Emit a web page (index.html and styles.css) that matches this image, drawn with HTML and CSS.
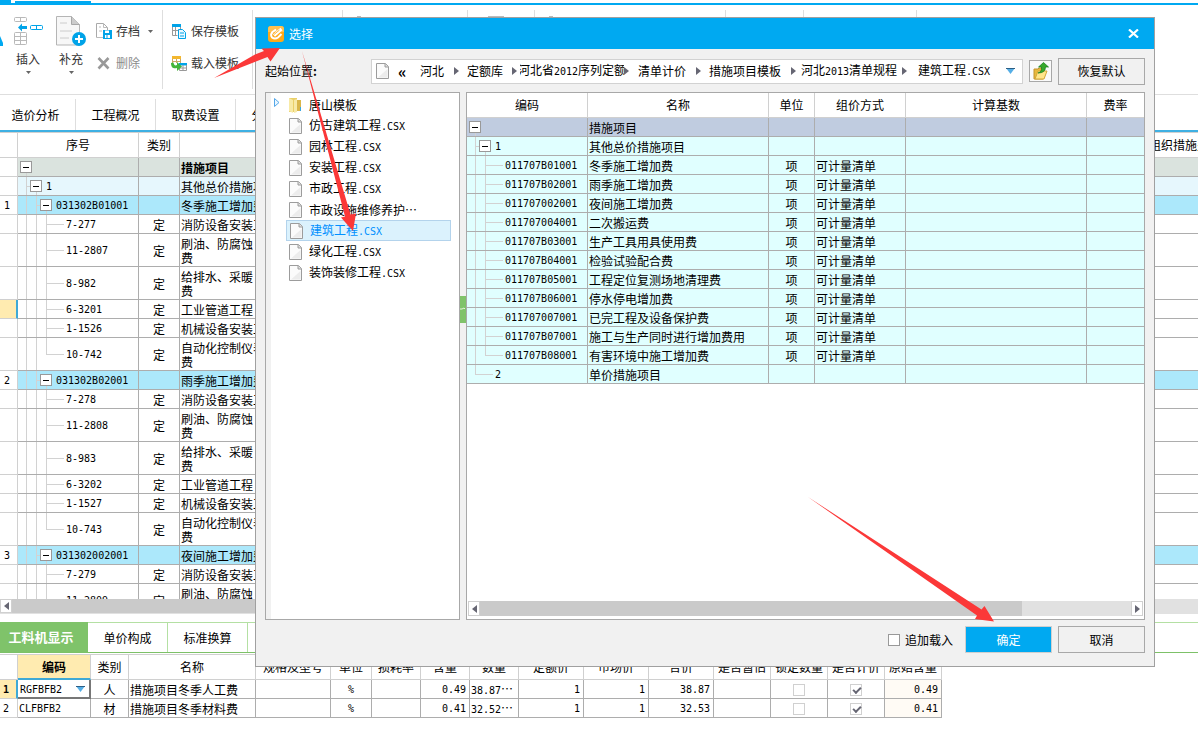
FILE: index.html
```html
<!DOCTYPE html>
<html lang="zh-CN">
<head>
<meta charset="utf-8">
<title>措施项目</title>
<link rel="stylesheet" href="styles.css">
</head>
<body>
<svg class="defs" aria-hidden="true">
  <symbol id="i-file" viewBox="0 0 13 16"><path d="M.5.5h9l3 3v12H.5z" fill="#fbfbfb" stroke="#9c9c9c"/><path d="M9 .5v3.500h3.500" fill="#ddd" stroke="#9c9c9c"/><path d="M2 14.500 11.500 6v8.500z" fill="#ececec"/></symbol>
  <symbol id="i-tri" viewBox="0 0 9 6"><path d="M0 0h9L4.500 6z" fill="#55aee6"/><path d="M0 0h9v1H0z" fill="#2c5f86"/></symbol>
  <symbol id="i-next" viewBox="0 0 5 8"><path d="M0 0 5 4 0 8z" fill="#666673"/></symbol>
  <symbol id="i-prev" viewBox="0 0 5 8"><path d="M5 0 0 4l5 4z" fill="#666673"/></symbol>
  <symbol id="i-down" viewBox="0 0 5 3"><path d="M0 0h5L2.500 3z" fill="#666"/></symbol>
</svg>

<div class="app">
  <div class="topstrip"><i class="chip-a"></i><i class="chip-b"></i></div>

  <header class="ribbon">
    <svg class="edge-icon" viewBox="0 0 3 12" aria-hidden="true"><path d="M0 2v10h3V9z" fill="#00a9f1"/></svg>
    <button class="big">
      <svg width="30" height="30" viewBox="0 0 30 30" fill="none"><g stroke="#b9b9b9"><rect x="1.500" y="1.500" width="12" height="4" rx="1"/><path d="M7.500 1v5"/><rect x="1.500" y="16.500" width="12" height="12" rx="1"/><path d="M7.500 16v13M1 20.500h13M1 24.500h13"/></g><rect x="17.500" y="9.500" width="12" height="4" rx="1" stroke="#00a3e8"/><path d="M23.500 9v5" stroke="#00a3e8"/><path d="m5 11.500 4-4V10h5v3H9v2.500z" fill="#00a3e8"/></svg>
      <span>插入</span><svg width="5" height="3"><use href="#i-down"/></svg>
    </button>
    <button class="big">
      <svg width="30" height="30" viewBox="0 0 30 30" fill="none"><path d="M.5.500h15l8 8v20.500H.5z" fill="#f7f7f7" stroke="#b5b5b5"/><path d="M15.500.5v8h8" fill="#ccc" stroke="#a8a8a8"/><path d="M4 7h7M4 15h12M4 22h9" stroke="#ccc"/><circle cx="23" cy="23" r="7" fill="#00a3e8"/><path d="M23 19v8M19 23h8" stroke="#fff" stroke-width="2"/></svg>
      <span>补充</span><svg width="5" height="3"><use href="#i-down"/></svg>
    </button>
    <div class="pair">
      <button class="small"><svg width="16" height="16" viewBox="0 0 16 16" fill="none"><path d="M.5 14.500V.5h7l4 4v3" stroke="#aaa"/><path d="M7.500.5v4h4M3 4h2M3 8h3M.5 14.500H7" stroke="#bbb"/><path d="M7 7h9v9H7z" fill="#00a3e8"/><path d="M9 7.500h4V10H9zM9 12h5v3H9z" fill="#fff"/><path d="M11 12v3" stroke="#00a3e8"/></svg><span>存档</span><svg class="more" width="5" height="3"><use href="#i-down"/></svg></button>
      <button class="small" disabled><svg width="16" height="16" viewBox="0 0 16 16"><path d="m2.500 3 10 10.500m0-10.500-10 10.500" stroke="#999" stroke-width="2.600"/></svg><span>删除</span></button>
    </div>
    <div class="pair ruled">
      <button class="small"><svg width="16" height="16" viewBox="0 0 16 16" fill="none"><path d="M1 1h9v3H1z" fill="#00a3e8"/><path d="M1.500 4v8.500h5M4.500 4v9M1 7.500h8M9.500 4v3" stroke="#999"/><path d="M7.500 6.500h4l3 3v6h-7z" fill="#eaf8ff" stroke="#00a3e8"/><path d="M9 10h4M9 13h4" stroke="#00a3e8"/></svg><span>保存模板</span></button>
      <button class="small"><svg width="16" height="16" viewBox="0 0 16 16" fill="none"><path d="M1 1h9v3H1z" fill="#f3b72f"/><path d="M1.500 4v4M5.500 4v4M9.500 4v4M1 6.500h9" stroke="#c7a765"/><path d="M8 8h8v2.500H8z" fill="#00a3e8"/><path d="M8.500 10v5.500h7V10M8 13h8M12 10v5" stroke="#999"/><path d="M0 8c0 5 3 6 6 5v3l5-4.500L6 7v3C4 11 3 10 2.500 7.500z" fill="#42b53b"/></svg><span>载入模板</span></button>
    </div>
    <div class="groups"><i></i><b class="dot"></b><i></i><b class="bar"></b><i></i><b class="dot far"></b><i></i><i></i><i></i></div>
  </header>

  <nav class="tabs"><button>造价分析</button><button>工程概况</button><button>取费设置</button><button>分部分项</button></nav>

  <main class="sheet">
    <table class="grid main-grid">
      <colgroup><col class="w18"><col class="w121"><col class="w41"><col><col class="w54"></colgroup>
      <thead><tr><th></th><th>序号</th><th>类别</th><th>名称</th><th class="cut">组织措施费</th></tr></thead>
      <tbody>
        <tr class="root"><td></td><td class="t0"><button class="tog" aria-label="折叠"></button></td><td></td><td>措施项目</td><td></td></tr>
        <tr class="sub"><td></td><td class="t1"><button class="tog" aria-label="折叠"></button>1</td><td></td><td>其他总价措施项目</td><td></td></tr>
        <tr class="item"><td>1</td><td class="t2"><button class="tog" aria-label="折叠"></button>031302B01001</td><td></td><td>冬季施工增加费</td><td></td></tr>
        <tr><td></td><td class="t3">7-277</td><td>定</td><td>消防设备安装工程</td><td></td></tr>
        <tr class="tall"><td></td><td class="t3">11-2807</td><td>定</td><td>刷油、防腐蚀<br>费</td><td></td></tr>
        <tr class="tall"><td></td><td class="t3">8-982</td><td>定</td><td>给排水、采暖<br>费</td><td></td></tr>
        <tr><td class="current"></td><td class="t3">6-3201</td><td>定</td><td>工业管道工程</td><td></td></tr>
        <tr><td></td><td class="t3">1-1526</td><td>定</td><td>机械设备安装工程</td><td></td></tr>
        <tr class="tall"><td></td><td class="t3 last">10-742</td><td>定</td><td>自动化控制仪表<br>费</td><td></td></tr>
        <tr class="item"><td>2</td><td class="t2"><button class="tog" aria-label="折叠"></button>031302B02001</td><td></td><td>雨季施工增加费</td><td></td></tr>
        <tr><td></td><td class="t3">7-278</td><td>定</td><td>消防设备安装工程</td><td></td></tr>
        <tr class="tall"><td></td><td class="t3">11-2808</td><td>定</td><td>刷油、防腐蚀<br>费</td><td></td></tr>
        <tr class="tall"><td></td><td class="t3">8-983</td><td>定</td><td>给排水、采暖<br>费</td><td></td></tr>
        <tr><td></td><td class="t3">6-3202</td><td>定</td><td>工业管道工程</td><td></td></tr>
        <tr><td></td><td class="t3">1-1527</td><td>定</td><td>机械设备安装工程</td><td></td></tr>
        <tr class="tall"><td></td><td class="t3 last">10-743</td><td>定</td><td>自动化控制仪表<br>费</td><td></td></tr>
        <tr class="item"><td>3</td><td class="t2"><button class="tog" aria-label="折叠"></button>031302002001</td><td></td><td>夜间施工增加费</td><td></td></tr>
        <tr><td></td><td class="t3">7-279</td><td>定</td><td>消防设备安装工程</td><td></td></tr>
        <tr class="tall"><td></td><td class="t3">11-2809</td><td>定</td><td>刷油、防腐蚀<br>费</td><td></td></tr>
      </tbody>
    </table>
  </main>
  <div class="hscroll page-scroll"><button aria-label="向左"><svg width="5" height="8"><use href="#i-prev"/></svg></button><div class="thumb"></div></div>

  <section class="detail">
    <nav class="subtabs"><button class="on">工料机显示</button><button>单价构成</button><button>标准换算</button></nav>
    <table class="grid detail-grid">
      <colgroup><col class="w18"><col class="w73"><col class="w38"><col class="w127"><col class="w75"><col class="w41"><col class="w49"><col class="w49"><col class="w49"><col class="w65"><col class="w65"><col class="w65"><col class="w57"><col class="w57"><col class="w57"><col class="w57"></colgroup>
      <thead><tr><th></th><th class="picked">编码</th><th>类别</th><th>名称</th><th>规格及型号</th><th>单位</th><th>损耗率</th><th>含量</th><th>数量</th><th>定额价</th><th>市场价</th><th>合价</th><th>是否暂估</th><th>锁定数量</th><th>是否计价</th><th>原始含量</th></tr></thead>
      <tbody>
        <tr><td class="current">1</td><td class="edit"><div><select aria-label="编码"><option>RGFBFB2</option></select><svg width="9" height="6"><use href="#i-tri"/></svg></div></td><td class="c">人</td><td>措施项目冬季人工费</td><td></td><td class="c m">%</td><td></td><td class="r m">0.49</td><td class="m">38.87<span class="dots">⋯</span></td><td class="r m">1</td><td class="r m">1</td><td class="r m">38.87</td><td></td><td class="c"><input type="checkbox" aria-label="锁定数量" disabled></td><td class="c"><input type="checkbox" aria-label="是否计价" checked disabled></td><td class="r m warm">0.49</td></tr>
        <tr><td>2</td><td class="m">CLFBFB2</td><td class="c">材</td><td>措施项目冬季材料费</td><td></td><td class="c m">%</td><td></td><td class="r m">0.41</td><td class="m">32.52<span class="dots">⋯</span></td><td class="r m">1</td><td class="r m">1</td><td class="r m">32.53</td><td></td><td class="c"><input type="checkbox" aria-label="锁定数量" disabled></td><td class="c"><input type="checkbox" aria-label="是否计价" checked disabled></td><td class="r m warm">0.41</td></tr>
      </tbody>
    </table>
  </section>
</div>

<div class="dialog" role="dialog" aria-label="选择">
  <div class="title">
    <svg width="16" height="16" viewBox="0 0 16 16"><rect width="16" height="16" rx="3" fill="#ffa918"/><path d="M0 3a3 3 0 0 1 3-3h10a3 3 0 0 1 3 3v3H0z" fill="#ffc04e"/><path d="M8 3.500 4.500 6Q2 8.500 4 11.500q3 2 6 0l3.500-3.500" fill="none" stroke="#fff" stroke-width="2"/><path d="M6 9.500 13.500 3" stroke="#fff" stroke-width="3"/><path d="M6 8.500 11.500 4" stroke="#ffb93c"/></svg>
    <span>选择</span>
    <button aria-label="关闭"><svg width="11" height="9" viewBox="0 0 11 9"><path d="m1 .500 9 8m0-8-9 8" stroke="#fff" stroke-width="2.200"/></svg></button>
  </div>
  <div class="where">
    <span class="lead">起始位置<b>:</b></span>
    <div class="path">
      <svg class="fi" width="13" height="16"><use href="#i-file"/></svg>
      <a href="#" class="back">«</a>
      <a href="#" class="s1">河北</a><svg class="nx" width="5" height="8"><use href="#i-next"/></svg>
      <a href="#" class="s2">定额库</a><svg class="nx" width="5" height="8"><use href="#i-next"/></svg>
      <a href="#" class="s3"><span>河北省<span class="m">2012</span>序列定额</span></a><svg class="nx" width="5" height="8"><use href="#i-next"/></svg>
      <a href="#" class="s4">清单计价</a><svg class="nx" width="5" height="8"><use href="#i-next"/></svg>
      <a href="#" class="s5">措施项目模板</a><svg class="nx" width="5" height="8"><use href="#i-next"/></svg>
      <a href="#" class="s6">河北<span class="m">2013</span>清单规程</a><svg class="nx" width="5" height="8"><use href="#i-next"/></svg>
      <a href="#" class="s7">建筑工程<span class="m">.CSX</span></a>
      <button class="drop" aria-label="展开"><svg width="9" height="6"><use href="#i-tri"/></svg></button>
    </div>
    <button class="up" aria-label="上一级"><svg width="16" height="18" viewBox="0 0 16 18"><path d="M1 7h4l1-1h4v11H1z" fill="#e7b93c" stroke="#c2922c"/><path d="m2 17 3-8h9l-3 8z" fill="#ffe58a" stroke="#d2a637"/><path d="M5 11q4-1 3.500-6H5.500L10.500.5l5 4.500h-3q0 6-7.500 6z" fill="#37a92c" stroke="#16791b" stroke-width=".7"/></svg></button>
    <button class="btn">恢复默认</button>
  </div>
  <div class="panes">
    <ul class="files">
      <li><svg class="open" width="6" height="9" viewBox="0 0 6 9"><path d="M.5.500 5 4.500.5 8.500z" fill="#eaf6ff" stroke="#55a7e8"/></svg><svg width="15" height="16" viewBox="0 0 15 16"><path d="M1 1h8v14H1z" fill="#e9cf68"/><path d="m1 1 4 2v13l-4-2z" fill="#f8eaa6"/><path d="M6 3h7v11H6z" fill="#d9b64a"/><path d="m6 3 3-1v13l-3 1z" fill="#f7e9a7"/><path d="M12 10h1v4h-1z" fill="#38a7e0"/></svg><span>唐山模板</span></li>
      <li><svg width="13" height="16"><use href="#i-file"/></svg><span>仿古建筑工程<span class="m">.CSX</span></span></li>
      <li><svg width="13" height="16"><use href="#i-file"/></svg><span>园林工程<span class="m">.CSX</span></span></li>
      <li><svg width="13" height="16"><use href="#i-file"/></svg><span>安装工程<span class="m">.CSX</span></span></li>
      <li><svg width="13" height="16"><use href="#i-file"/></svg><span>市政工程<span class="m">.CSX</span></span></li>
      <li><svg width="13" height="16"><use href="#i-file"/></svg><span>市政设施维修养护⋯</span></li>
      <li class="sel"><svg width="13" height="16"><use href="#i-file"/></svg><span>建筑工程<span class="m">.CSX</span></span></li>
      <li><svg width="13" height="16"><use href="#i-file"/></svg><span>绿化工程<span class="m">.CSX</span></span></li>
      <li><svg width="13" height="16"><use href="#i-file"/></svg><span>装饰装修工程<span class="m">.CSX</span></span></li>
    </ul>
    <div class="split"><i><svg width="6" height="4" viewBox="0 0 6 4"><path d="M1 1v2m1-1 2-1 1 1" fill="none" stroke="#e3f4dc"/></svg></i></div>
    <div class="preview">
      <table class="grid pick-grid">
        <colgroup><col class="w121"><col class="w181"><col class="w46"><col class="w91"><col class="w181"><col></colgroup>
        <thead><tr><th>编码</th><th>名称</th><th>单位</th><th>组价方式</th><th>计算基数</th><th>费率</th></tr></thead>
        <tbody>
          <tr class="head"><td class="p0"><button class="tog" aria-label="折叠"></button></td><td>措施项目</td><td></td><td></td><td></td><td></td></tr>
          <tr><td class="p1"><button class="tog" aria-label="折叠"></button>1</td><td>其他总价措施项目</td><td></td><td></td><td></td><td></td></tr>
          <tr><td class="p2">011707B01001</td><td>冬季施工增加费</td><td>项</td><td>可计量清单</td><td></td><td></td></tr>
          <tr><td class="p2">011707B02001</td><td>雨季施工增加费</td><td>项</td><td>可计量清单</td><td></td><td></td></tr>
          <tr><td class="p2">011707002001</td><td>夜间施工增加费</td><td>项</td><td>可计量清单</td><td></td><td></td></tr>
          <tr><td class="p2">011707004001</td><td>二次搬运费</td><td>项</td><td>可计量清单</td><td></td><td></td></tr>
          <tr><td class="p2">011707B03001</td><td>生产工具用具使用费</td><td>项</td><td>可计量清单</td><td></td><td></td></tr>
          <tr><td class="p2">011707B04001</td><td>检验试验配合费</td><td>项</td><td>可计量清单</td><td></td><td></td></tr>
          <tr><td class="p2">011707B05001</td><td>工程定位复测场地清理费</td><td>项</td><td>可计量清单</td><td></td><td></td></tr>
          <tr><td class="p2">011707B06001</td><td>停水停电增加费</td><td>项</td><td>可计量清单</td><td></td><td></td></tr>
          <tr><td class="p2">011707007001</td><td>已完工程及设备保护费</td><td>项</td><td>可计量清单</td><td></td><td></td></tr>
          <tr><td class="p2">011707B07001</td><td>施工与生产同时进行增加费用</td><td>项</td><td>可计量清单</td><td></td><td></td></tr>
          <tr><td class="p2 last">011707B08001</td><td>有害环境中施工增加费</td><td>项</td><td>可计量清单</td><td></td><td></td></tr>
          <tr><td class="p3">2</td><td>单价措施项目</td><td></td><td></td><td></td><td></td></tr>
        </tbody>
      </table>
      <div class="hscroll"><button aria-label="向左"><svg width="5" height="8"><use href="#i-prev"/></svg></button><div class="thumb"></div><button aria-label="向右"><svg width="5" height="8"><use href="#i-next"/></svg></button></div>
    </div>
  </div>
  <div class="actions">
    <label><input type="checkbox">追加载入</label>
    <button class="btn ok">确定</button>
    <button class="btn">取消</button>
  </div>
</div>

<svg class="marks" width="1198" height="743" viewBox="0 0 1198 743" aria-hidden="true">
  <g fill="#fb3838"><path d="M214 78 255 54.500l9-3.500-2.500-2.500L280 48l-9.500 13.500L267.500 57z"/><path d="M302 51 350.500 214.500l5.500-1L353 231l-12-13.500 4-1z"/><path d="M808 497 981.500 609.500l3-3.500L994 621.500 975 619l2-3.500z"/></g>
</svg>
</body>
</html>
```
FILE: styles.css
```css
* { box-sizing: border-box; }
html, body { height: 100%; }
body {
  margin: 0;
  background: #fff;
  color: #000;
  font: 12px/16px "Noto Sans CJK SC", sans-serif;
  position: relative;
  overflow: hidden;
}
button { font: inherit; color: inherit; background: none; border: 0; padding: 0; margin: 0; }
a { color: inherit; text-decoration: none; }
svg { display: block; flex: none; }
.defs { position: absolute; width: 0; height: 0; }
.app { height: 100%; display: flex; flex-direction: column; }
.m { font-family: "DejaVu Sans Mono", monospace; font-size: 10px; }
.dots { font: 12px/12px "Noto Sans CJK SC", sans-serif; }

/* ribbon */
.topstrip { height: 5px; border-bottom: 2px solid #00a9f1; display: flex; align-items: flex-end; gap: 4px; flex: none; }
.chip-a { width: 11px; height: 3px; background: #00a9f1; }
.chip-b { width: 76px; height: 2px; background: #00a9f1; }
.ribbon { height: 90px; flex: none; display: flex; border-bottom: 1px solid #dedede; padding-top: 5px; color: #333; }
.edge-icon { width: 3px; height: 12px; margin-top: 24px; }
.big { width: 42px; margin-left: 4px; padding-top: 6px; display: flex; flex-direction: column; align-items: center; height: 79px; }
.big + .big { margin-left: 1px; }
.big span { margin: 5px 0 4px; }
.pair { display: flex; flex-direction: column; padding: 13px 0 0 4px; gap: 16px; height: 79px; width: 70px; }
.ruled { border-left: 1px solid #dedede; width: 90px; padding-left: 8px; }
.small { display: flex; align-items: center; gap: 4px; height: 16px; white-space: nowrap; }
.small:disabled { color: #8b8b8b; }
.more { margin-left: 4px; }
.groups { display: flex; height: 79px; border-left: 1px solid #dedede; }
.groups i { border-left: 1px solid #dedede; margin-left: 89px; }
.groups i + i { margin-left: 77px; }
.groups i + i + i { margin-left: 112px; }
.groups b { height: 4px; margin-top: 6px; background: #bbb; }
.groups .dot { width: 4px; margin-left: 14px; }
.groups .bar { width: 16px; margin-left: 20px; }
.groups b + i { margin-left: 30px; }
.groups .dot + i { margin-left: 106px; }
.groups .far + i { margin-left: 172px; }

/* page tabs */
.tabs { display: flex; height: 37px; padding-top: 4px; border-bottom: 2px solid #3eb0e3; flex: none; }
.tabs button { width: 80px; border-right: 1px solid #dedede; }
.tabs button:first-child { width: 76px; padding-right: 4px; }

/* tables */
.grid { border-collapse: separate; border-spacing: 0; table-layout: fixed; }
.grid th, .grid td { border: 0 solid #adadad; border-width: 0 1px 1px 0; padding: 2px 0 0 1px; height: 19px; line-height: 14px; white-space: nowrap; overflow: hidden; text-align: left; }
.grid th { height: 25px; font-weight: normal; text-align: center; border-color: #d0d0d0; padding: 0; }
.grid .c { text-align: center; padding: 2px 0 0; }
.grid .r { text-align: right; padding: 2px 3px 0 0; }
.w18 { width: 18px; } .w38 { width: 38px; } .w41 { width: 41px; } .w46 { width: 46px; } .w49 { width: 49px; }
.w54 { width: 54px; } .w57 { width: 57px; } .w65 { width: 65px; } .w73 { width: 73px; } .w75 { width: 75px; }
.w91 { width: 91px; } .w121 { width: 121px; } .w127 { width: 127px; } .w181 { width: 181px; }

.sheet { flex: 1 1 0; min-height: 0; overflow: hidden; border-top: 1px solid #d0d0d0; }
.main-grid { width: 100%; }
.main-grid th.cut { text-align: left; padding-left: 5px; border-right: 0; }
.main-grid td:last-child { border-right: 0; }
.grid .tall td { height: 33px; }
.main-grid td:first-child, .detail-grid td:first-child, .main-grid td:nth-child(2), .pick-grid td:first-child { font-family: "DejaVu Sans Mono", monospace; font-size: 10px; }
.main-grid td:first-child { border-color: #d0d0d0; background: #fff; padding-left: 4px; }
.detail-grid td:first-child { border-color: #d0d0d0; padding-left: 3px; }
.main-grid td:nth-child(3) { text-align: center; padding-left: 0; }
.root td { background-color: #dae3de; }
.root td:nth-child(4) { font-weight: bold; }
.sub td { background-color: #e6f7fd; }
.item td { background-color: #ace8fb; }
.grid td.current { background: #ffebb0; border-right: 2px solid #3fa9d6; font-weight: bold; }

/* tree guides */
.tog { display: inline-block; vertical-align: middle; width: 12px; height: 12px; margin: -2px 4px 0 0; border: 1px solid #999; background: linear-gradient(#000, #000) center / 6px 1px no-repeat #fff; }
.grid .t0 { padding-left: 2px; background: linear-gradient(#d2d2d2, #d2d2d2) 8px 100% / 1px 6px no-repeat; }
.grid .t1 { padding-left: 12px; background-image: linear-gradient(#d2d2d2, #d2d2d2), linear-gradient(#d2d2d2, #d2d2d2), linear-gradient(#d2d2d2, #d2d2d2); background-repeat: no-repeat; background-position: 8px 0, 18px 100%, 8px 50%; background-size: 1px 100%, 1px 6px, 5px 1px; }
.grid .t2 { padding-left: 22px; background-image: linear-gradient(#d2d2d2, #d2d2d2), linear-gradient(#d2d2d2, #d2d2d2), linear-gradient(#d2d2d2, #d2d2d2), linear-gradient(#d2d2d2, #d2d2d2); background-repeat: no-repeat; background-position: 8px 0, 18px 0, 28px 100%, 18px 50%; background-size: 1px 100%, 1px 100%, 1px 6px, 5px 1px; }
.grid .t3 { padding-left: 48px; background-image: linear-gradient(#d2d2d2, #d2d2d2), linear-gradient(#d2d2d2, #d2d2d2), linear-gradient(#d2d2d2, #d2d2d2), linear-gradient(#d2d2d2, #d2d2d2); background-repeat: no-repeat; background-position: 8px 0, 18px 0, 28px 0, 28px 50%; background-size: 1px 100%, 1px 100%, 1px 100%, 18px 1px; }
.grid .t3.last { background-size: 1px 100%, 1px 100%, 1px 50%, 18px 1px; }
.root .t0 { background-color: #dae3de; }
.grid .p0 { padding-left: 2px; background: linear-gradient(#d2d2d2, #d2d2d2) 8px 100% / 1px 6px no-repeat #c0cce0; }
.grid .p1 { padding-left: 12px; background-image: linear-gradient(#d2d2d2, #d2d2d2), linear-gradient(#d2d2d2, #d2d2d2), linear-gradient(#d2d2d2, #d2d2d2); background-repeat: no-repeat; background-position: 8px 0, 18px 100%, 8px 50%; background-size: 1px 100%, 1px 6px, 5px 1px; }
.grid .p2 { padding-left: 38px; background-image: linear-gradient(#d2d2d2, #d2d2d2), linear-gradient(#d2d2d2, #d2d2d2), linear-gradient(#d2d2d2, #d2d2d2); background-repeat: no-repeat; background-position: 8px 0, 18px 0, 18px 50%; background-size: 1px 100%, 1px 100%, 18px 1px; }
.grid .p2.last { background-size: 1px 100%, 1px 50%, 18px 1px; }
.grid .p3 { padding-left: 28px; background-image: linear-gradient(#d2d2d2, #d2d2d2), linear-gradient(#d2d2d2, #d2d2d2); background-repeat: no-repeat; background-position: 8px 0, 8px 50%; background-size: 1px 50%, 18px 1px; }

/* scroll bars */
.hscroll { display: flex; height: 15px; background: #e1e1e1; flex: none; }
.hscroll button { width: 12px; background: #fff; border: 1px solid #d0d0d0; display: flex; align-items: center; justify-content: center; }
.hscroll .thumb { background: #cacaca; flex: 0 1 542px; }
.page-scroll { border-bottom: 1px solid #e1e1e1; }

/* resource detail */
.detail { padding: 8px 0 25px; flex: none; }
.subtabs { display: flex; border-top: 1px solid #b4e0a3; border-bottom: 1px solid #7dc168; height: 31px; margin-bottom: 1px; }
.subtabs button { width: 80px; border-right: 1px solid #b4e0a3; }
.subtabs .on { width: 88px; padding-right: 6px; background: #7fc36a; color: #fff; font-weight: bold; font-size: 13px; border: 0; margin-top: -1px; }
.detail-grid { width: 942px; border-top: 1px solid #d0d0d0; }
.grid th.picked { background: #ffebb0; font-weight: bold; border-bottom: 2px solid #3fa9d6; }
.grid td.edit { padding: 0; border: 0; }
.edit div { display: flex; align-items: center; border: 1px solid #777; border-width: 0 2px 2px 0; height: 19px; padding-right: 4px; }
.edit select { flex: 1; min-width: 0; appearance: none; border: 0; background: none; padding: 2px 0 0 2px; font: 10px/14px "DejaVu Sans Mono", monospace; color: #000; }
.warm { background: #fffbf5; }
input[type=checkbox] { appearance: none; display: inline-block; width: 12px; height: 12px; margin: 0; border: 1px solid #999; background: #fff; vertical-align: middle; position: relative; }
td input[type=checkbox] { margin-top: -3px; }
input:disabled { border-color: #d0d0d0; }
input:checked::after { content: ""; position: absolute; left: 2px; top: 2px; width: 6px; height: 3px; border: solid #666673; border-width: 0 0 2px 2px; transform: rotate(-45deg); }

/* dialog */
.dialog { position: absolute; left: 255px; right: 43px; top: 17px; bottom: 76px; border: 1px solid #a0a0a0; background: #f1f1f1; display: flex; flex-direction: column; }
.title { height: 31px; flex: none; background: #00a9f1; color: #fff; display: flex; align-items: center; gap: 5px; padding: 0 15px 0 12px; }
.title button { margin-left: auto; }
.where { display: flex; align-items: center; padding: 9px 9px 0; height: 35px; }
.lead { width: 106px; }
.path { flex: 1; min-width: 0; height: 25px; background: #fff; border: 1px solid #d2d2d2; display: flex; align-items: center; padding: 0 4px; white-space: nowrap; overflow: hidden; }
.path a { flex: none; }
.back { width: 22px; margin-left: 9px; font-size: 16px; font-weight: bold; }
.s1 { width: 34px; }
.s2 { width: 45px; margin-left: 8px; }
.s3 { width: 104px; margin-left: 3px; display: flex; justify-content: center; overflow: hidden; }
.s3 > span { flex: none; }
.s4 { width: 58px; margin-left: 9px; }
.s5 { width: 82px; margin-left: 8px; }
.s6 { width: 101px; margin-left: 5px; }
.s7 { margin-left: 11px; }
.drop { margin-left: auto; padding-right: 3px; }
.up { width: 23px; height: 22px; margin: 0 6px; border: 1px solid #a8a8a8; background: #fafafa; display: flex; align-items: center; justify-content: center; }
.btn { width: 87px; height: 27px; border: 1px solid #a8a8a8; flex: none; }
.panes { flex: 1; min-height: 0; display: flex; padding: 8px 9px 0; }
.files { width: 195px; margin: 0; padding: 1px 8px 0 14px; list-style: none; border: 1px solid #a8a8a8; background: linear-gradient(#f1f1f1, #f1f1f1) 0 0 / 5px 100% no-repeat #fff; }
.files li { height: 21px; display: flex; align-items: center; gap: 7px; padding-left: 9px; white-space: nowrap; }
.files li:first-child { padding-left: 0; gap: 6px; }
.files li:first-child .open { margin: 0 2px 4px -6px; }
.files .sel { border: 1px solid #b3d3ec; background: #dbf2fd; color: #0090ff; margin-left: 6px; padding-left: 3px; }
.split { width: 6px; display: flex; align-items: center; }
.split i { width: 6px; height: 27px; background: #7fc36a; display: flex; align-items: center; margin-bottom: 94px; }
.preview { flex: 1; min-width: 0; background: #fff; border: 1px solid #a8a8a8; display: flex; flex-direction: column; justify-content: space-between; }
.pick-grid { width: 100%; }
.pick-grid td { background-color: #e0ffff; }
.pick-grid .head td { background-color: #c0cce0; }
.pick-grid th:last-child, .pick-grid td:last-child { border-right: 0; }
.pick-grid td:nth-child(3) { text-align: center; padding-left: 0; }
.preview .hscroll { margin: 0 1px 3px; }
.preview .hscroll button:last-child { margin-left: auto; }
.page-scroll .thumb { flex-basis: 1000px; }
.actions { display: flex; align-items: center; justify-content: flex-end; gap: 6px; padding: 6px 9px 13px; }
.actions label { display: flex; align-items: center; gap: 5px; margin-right: 6px; }
.ok { background: #00a9f1; color: #fff; border-color: #cfcfcf; }

.marks { position: absolute; left: 0; top: 0; pointer-events: none; }
```
